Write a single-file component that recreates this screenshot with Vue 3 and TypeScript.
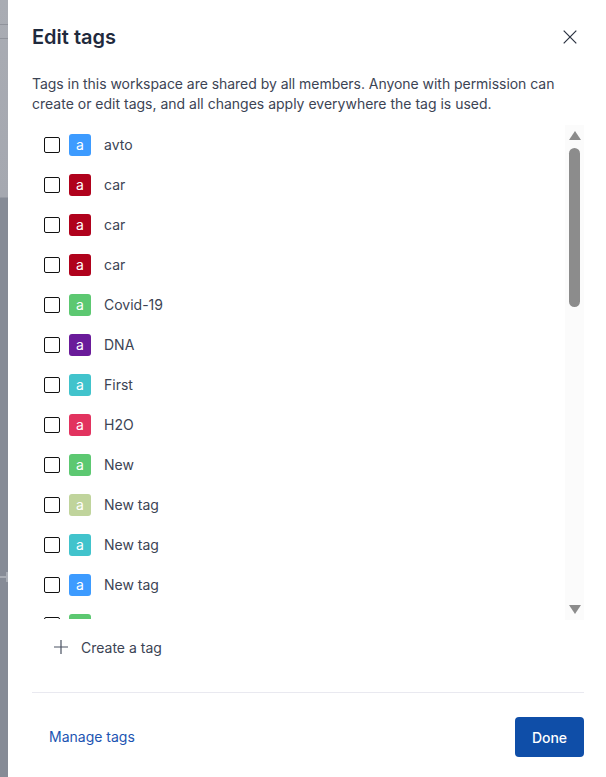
<template>
  <div class="page">
    <div class="backdrop">
      <span class="rule rule-a"></span>
      <span class="rule rule-b"></span>
      <span class="plus-h"></span>
      <span class="plus-v"></span>
    </div>
    <section class="modal">
      <header class="head">
        <h1>Edit tags</h1>
        <button class="close" aria-label="Close">
          <svg width="14" height="14" viewBox="0 0 14 14">
            <path d="M.7.7l12.6 12.6M13.3.7L.7 13.3" stroke="#2a3140" stroke-width="1.2" fill="none" />
          </svg>
        </button>
      </header>
      <p class="intro">
        <span class="first-line">Tags in this workspace are shared by all members. Anyone with permission can</span>
        create or edit tags, and all changes apply everywhere the tag is used.
      </p>
      <div class="list-wrap">
        <ul class="list">
          <li v-for="(tag, i) in tags" :key="i" class="row">
            <span class="check"></span>
            <span class="badge" :style="{ background: tag.color }">a</span>
            <span class="name">{{ tag.name }}</span>
          </li>
        </ul>
        <div class="scrollbar">
          <span class="arrow up"></span>
          <span class="thumb"></span>
          <span class="arrow down"></span>
        </div>
      </div>
      <div class="create">
        <svg width="14" height="14" viewBox="0 0 14 14">
          <path d="M7 0v14M0 7h14" stroke="#4a5262" stroke-width="1.2" fill="none" />
        </svg>
        <span>Create a tag</span>
      </div>
      <footer class="foot">
        <a class="manage">Manage tags</a>
        <button class="done">Done</button>
      </footer>
    </section>
  </div>
</template>

<script setup lang="ts">
const blue = '#3d9bff'
const red = '#b0021c'
const green = '#5cc871'
const teal = '#41c3cc'

const tags = [
  { name: 'avto', color: blue },
  { name: 'car', color: red },
  { name: 'car', color: red },
  { name: 'car', color: red },
  { name: 'Covid-19', color: green },
  { name: 'DNA', color: '#6a1b9a' },
  { name: 'First', color: teal },
  { name: 'H2O', color: '#e2335f' },
  { name: 'New', color: green },
  { name: 'New tag', color: '#c0d49c' },
  { name: 'New tag', color: teal },
  { name: 'New tag', color: blue },
  { name: 'New tag', color: green },
]
</script>

<style>
html,
body {
  margin: 0;
  overflow: hidden;
}
</style>

<style scoped>
.page {
  display: flex;
  width: 606px;
  height: 777px;
  overflow: hidden;
  font-family: Inter, "Liberation Sans", sans-serif;
  background: #fff;
}

.backdrop {
  position: relative;
  flex: 0 0 8px;
  background: linear-gradient(#a9acb3 0, #a5a8b0 197px, #868b96 198px, #868b96 100%);
}

.rule {
  position: absolute;
  left: 0;
  width: 8px;
  height: 1px;
  background: #90939b;
}

.rule-a { top: 24px; }
.rule-b { top: 38px; }

.plus-h {
  position: absolute;
  left: 0;
  top: 576px;
  width: 8px;
  height: 2px;
  background: #a9adb5;
}

.plus-v {
  position: absolute;
  left: 6px;
  top: 572px;
  width: 2px;
  height: 10px;
  background: #a9adb5;
}

.modal {
  flex: 1;
  display: flex;
  flex-direction: column;
  padding: 0 22px 0 24px;
  min-width: 0;
}

.head {
  display: flex;
  align-items: center;
  justify-content: space-between;
  height: 74px;
}

h1 {
  margin: 0;
  font-size: 20px;
  font-weight: 600;
  color: #1f2a3d;
}

.close {
  display: flex;
  padding: 0;
  margin-right: 7px;
  border: 0;
  background: none;
}

.intro {
  height: 51px;
  margin: 0;
  font-size: 14px;
  line-height: 20px;
  color: #3c4454;
}

.first-line {
  display: block;
  letter-spacing: -0.04px;
}

.list-wrap {
  display: flex;
  height: 495px;
  overflow: hidden;
}

.list {
  flex: 1;
  height: 494px;
  margin: 0;
  padding: 0 0 0 12px;
  list-style: none;
  overflow: hidden;
}

.row {
  display: flex;
  align-items: center;
  height: 40px;
  font-size: 14px;
  color: #3c4454;
}

.check {
  box-sizing: border-box;
  width: 16px;
  height: 16px;
  border: 1px solid #111;
  border-radius: 2px;
}

.badge {
  display: flex;
  align-items: center;
  justify-content: center;
  box-sizing: border-box;
  width: 22px;
  height: 22px;
  margin-left: 9px;
  padding-bottom: 2px;
  border-radius: 3px;
  color: #fff;
  font-size: 14px;
}

.name {
  margin-left: 13px;
  padding-bottom: 2px;
}

.scrollbar {
  display: flex;
  flex-direction: column;
  align-items: center;
  flex: 0 0 19px;
  background: #fbfbfb;
}

.thumb {
  width: 11px;
  height: 159px;
  margin-top: 8px;
  border-radius: 6px;
  background: #8c8c8c;
}

.arrow {
  width: 0;
  height: 0;
  border-left: 6px solid transparent;
  border-right: 6px solid transparent;
}

.up {
  margin-top: 6px;
  border-bottom: 9px solid #8c8c8c;
}

.down {
  margin-top: auto;
  margin-bottom: 6px;
  border-top: 9px solid #8c8c8c;
}

.create {
  display: flex;
  align-items: center;
  gap: 13px;
  height: 54px;
  padding-left: 22px;
  font-size: 14px;
  color: #3c4454;
}

.foot {
  display: flex;
  align-items: flex-start;
  justify-content: space-between;
  flex: 1;
  margin-top: 18px;
  padding: 24px 0 0 17px;
  border-top: 1px solid #e9e9f0;
}

.manage {
  margin-top: 11px;
  font-size: 14px;
  color: #1c54b2;
}

.done {
  width: 69px;
  height: 40px;
  border: 0;
  border-radius: 4px;
  background: #0f4ea8;
  color: #fff;
  font-family: inherit;
  font-size: 14px;
  font-weight: 500;
}
</style>
